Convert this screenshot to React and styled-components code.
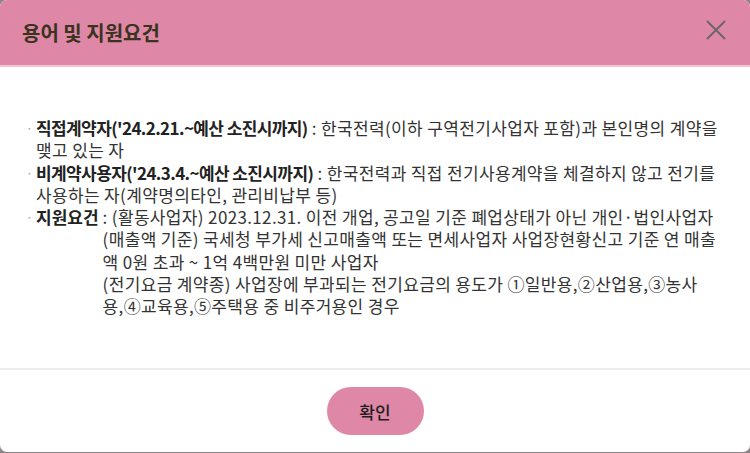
import React from "react";
import styled, { createGlobalStyle } from "styled-components";

const GlobalStyle = createGlobalStyle`
  * { box-sizing: border-box; }
  html, body { margin: 0; padding: 0; }
  body {
    background: #8f8589;
    font-family: "Noto Sans CJK KR", "Noto Sans", sans-serif;
    overflow: hidden;
  }
`;

const Modal = styled.div`
  width: 750px;
  height: 452px;
  background: #ffffff;
  border-radius: 7px;
  overflow: hidden;
  display: flex;
  flex-direction: column;
`;

const Header = styled.header`
  height: 67px;
  flex: none;
  background: #df87a6;
  border-bottom: 2px solid #f3c4d4;
  display: flex;
  align-items: center;
  justify-content: space-between;
  padding: 0 20px 0 22px;
`;

const Title = styled.h2`
  margin: 0;
  font-size: 20px;
  font-weight: 700;
  color: #3a3320;
  letter-spacing: 0;
`;

const CloseButton = styled.button`
  width: 28px;
  height: 28px;
  padding: 0;
  border: 0;
  background: transparent;
  display: flex;
  align-items: center;
  justify-content: center;
  cursor: pointer;
  margin-top: -6px;
`;

const Body = styled.div`
  flex: 1;
  padding: 50px 22px 0 26px;
`;

const List = styled.ul`
  margin: 0;
  padding: 0;
  list-style: none;
  font-size: 17px;
  line-height: 22.3px;
  color: #333333;
`;

const Item = styled.li`
  display: flex;
`;

const Bullet = styled.span`
  flex: none;
  width: 10px;
  color: #9a9a9a;
  font-size: 12px;
`;

const Content = styled.div`
  flex: 1;
  min-width: 0;
  letter-spacing: 0.35px;
`;

const Label = styled.strong`
  font-weight: 700;
  color: #222222;
  letter-spacing: -0.6px;
`;

const Split = styled.div`
  display: flex;
`;

const LabelCell = styled.strong`
  flex: none;
  font-weight: 700;
  color: #222222;
  letter-spacing: 0;
  padding-right: 4px;
`;

const Details = styled.div`
  flex: 1;
  min-width: 0;
`;

const Line = styled.div``;

const Footer = styled.footer`
  height: 84px;
  flex: none;
  border-top: 2px solid #ececec;
  display: flex;
  align-items: center;
  justify-content: center;
`;

const ConfirmButton = styled.button`
  width: 97px;
  height: 48px;
  border: 0;
  border-radius: 24px;
  background: #df87a6;
  color: #1e1e1e;
  font-family: "Noto Sans CJK KR", sans-serif;
  font-size: 17px;
  font-weight: 500;
  cursor: pointer;
`;

export default function App() {
  return (
    <>
      <GlobalStyle />
      <Modal>
        <Header>
          <Title>용어 및 지원요건</Title>
          <CloseButton aria-label="닫기">
            <svg width="22" height="22" viewBox="0 0 22 22">
              <path d="M2 2 L20 20 M20 2 L2 20" stroke="#666666" strokeWidth="1.8" fill="none" />
            </svg>
          </CloseButton>
        </Header>
        <Body>
          <List>
            <Item>
              <Bullet>·</Bullet>
              <Content>
                <Label>직접계약자('24.2.21.~예산 소진시까지)</Label> : 한국전력(이하 구역전기사업자 포함)과 본인명의 계약을 맺고 있는 자
              </Content>
            </Item>
            <Item>
              <Bullet>·</Bullet>
              <Content>
                <Label>비계약사용자('24.3.4.~예산 소진시까지)</Label> : 한국전력과 직접 전기사용계약을 체결하지 않고 전기를 사용하는 자(계약명의타인, 관리비납부 등)
              </Content>
            </Item>
            <Item>
              <Bullet>·</Bullet>
              <Content>
                <Split>
                  <LabelCell>지원요건</LabelCell>
                  <Details>
                    <Line>: (활동사업자) 2023.12.31. 이전 개업, 공고일 기준 폐업상태가 아닌 개인·법인사업자</Line>
                    <Line>(매출액 기준) 국세청 부가세 신고매출액 또는 면세사업자 사업장현황신고 기준 연 매출액 0원 초과 ~ 1억 4백만원 미만 사업자</Line>
                    <Line>(전기요금 계약종) 사업장에 부과되는 전기요금의 용도가 ①일반용,②산업용,③농사용,④교육용,⑤주택용 중 비주거용인 경우</Line>
                  </Details>
                </Split>
              </Content>
            </Item>
          </List>
        </Body>
        <Footer>
          <ConfirmButton>확인</ConfirmButton>
        </Footer>
      </Modal>
    </>
  );
}
